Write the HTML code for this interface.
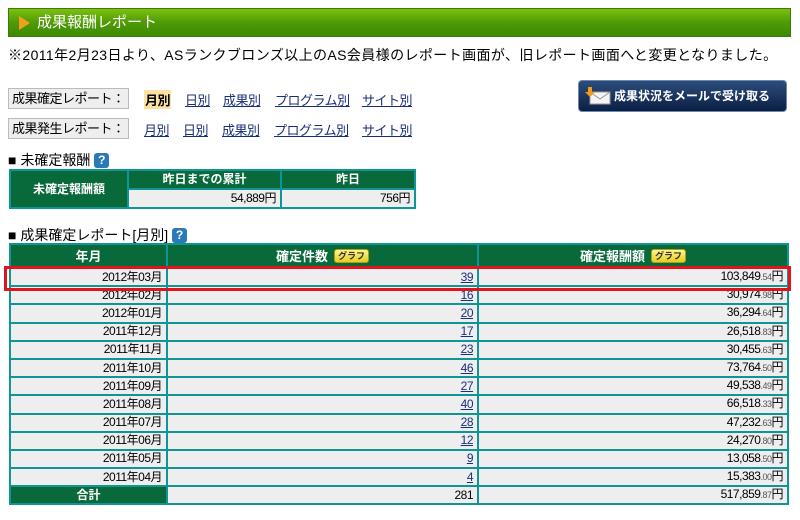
<!DOCTYPE html>
<html><head><meta charset="utf-8"><style>
*{margin:0;padding:0;box-sizing:border-box}
body{width:800px;height:520px;background:#fff;font-family:"Liberation Sans","Noto Sans CJK JP",sans-serif;font-size:12px;color:#000;position:relative;overflow:hidden}
.abs{position:absolute}
.hdr{left:8px;top:8px;width:783px;height:29px;background:linear-gradient(#7cc010,#4f9a06 50%,#3d8a04);border:1px solid #3a7a10;color:#fff;font-size:15px;line-height:27px;padding-left:28px}
.hdr:before{content:"";position:absolute;left:10px;top:7px;border-left:11px solid #f0a020;border-top:7px solid transparent;border-bottom:7px solid transparent}
a{color:#1a2f7a;text-decoration:underline}
.lab{background:#eee;border:1px solid #bbb;height:21px;line-height:19px;padding:0 3px;font-size:13px;letter-spacing:-0.5px}
.lnk{font-size:13px;letter-spacing:-0.5px}
.lnk span{position:absolute;top:0;white-space:nowrap}
.sel{background:#fbe2a0;font-weight:bold;padding:0 1px}
.btn{left:578px;top:80px;width:209px;height:32px;background:linear-gradient(#2c4d7c,#0b1f44);border:1px solid #6a88b0;border-radius:4px;color:#fff;font-weight:bold;font-size:12px;line-height:30px;padding-left:35px}
.sq{font-size:14px}
.q{display:inline-block;width:15px;height:15px;background:#2a7ab8;border-radius:3px;color:#fff;font-weight:bold;font-size:12px;text-align:center;line-height:15px;vertical-align:1px}
table{border-collapse:collapse;position:absolute;table-layout:fixed}
td,th{border:2px solid #0f9595;line-height:13px;padding:0;overflow:hidden;white-space:nowrap}
th{background:#08693a;color:#fff;font-weight:bold}
td{background:#eee;text-align:right;padding-right:4px;letter-spacing:-0.5px}
.sm{font-size:9px;color:#555}
.g{display:inline-block;background:linear-gradient(#fff58a,#e8cc20);border:1px solid #b89a10;border-radius:3px;color:#333;font-size:9px;height:14px;line-height:12px;padding:0 3px;margin-left:6px;vertical-align:2px}
.m tr{height:18.2px}
</style></head><body>
<div class="abs hdr">成果報酬レポート</div>
<div class="abs" style="left:8px;top:45px;font-size:14px;letter-spacing:0.4px">※2011年2月23日より、ASランクブロンズ以上のAS会員様のレポート画面が、旧レポート画面へと変更となりました。</div>
<div class="abs lab" style="left:8px;top:88px">成果確定レポート：</div>
<div class="abs lnk" style="left:0;top:90px"><span class="sel" style="left:144px">月別</span><span style="left:185px"><a>日別</a></span><span style="left:223px"><a>成果別</a></span><span style="left:275px"><a>プログラム別</a></span><span style="left:362px"><a>サイト別</a></span></div>
<div class="abs lab" style="left:8px;top:118px">成果発生レポート：</div>
<div class="abs lnk" style="left:0;top:120px"><span style="left:144px"><a>月別</a></span><span style="left:183px"><a>日別</a></span><span style="left:222px"><a>成果別</a></span><span style="left:274px"><a>プログラム別</a></span><span style="left:362px"><a>サイト別</a></span></div>
<div class="abs btn"><svg style="position:absolute;left:6px;top:6px" width="26" height="18"><rect x="5" y="5" width="20" height="12" fill="#f4f4f4" stroke="#999"/><path d="M5 5l10 7 10-7" fill="none" stroke="#999"/><path d="M3 0h4v5h3l-5 5-5-5h3z" fill="#f39a1a"/></svg>成果状況をメールで受け取る</div>
<div class="abs sq" style="left:8px;top:150px">■ 未確定報酬 <span class="q">?</span></div>
<table style="left:9px;top:169px;width:407px">
<tr style="height:19px"><th rowspan="2" style="width:118px">未確定報酬額</th><th style="width:153px">昨日までの累計</th><th>昨日</th></tr>
<tr style="height:19px"><td>54,889円</td><td>756円</td></tr></table>
<div class="abs sq" style="left:8px;top:225px">■ 成果確定レポート[月別] <span class="q">?</span></div>
<table class="m" style="left:9px;top:243px;width:780px">
<tr style="height:24px"><th style="width:157px;font-size:13px">年月</th><th style="width:311px;font-size:13px">確定件数<span class="g">グラフ</span></th><th style="font-size:13px">確定報酬額<span class="g">グラフ</span></th></tr>
<tr><td>2012年03月</td><td><a>39</a></td><td>103,849<span class="sm">.54</span>円</td></tr>
<tr><td>2012年02月</td><td><a>16</a></td><td>30,974<span class="sm">.98</span>円</td></tr>
<tr><td>2012年01月</td><td><a>20</a></td><td>36,294<span class="sm">.64</span>円</td></tr>
<tr><td>2011年12月</td><td><a>17</a></td><td>26,518<span class="sm">.83</span>円</td></tr>
<tr><td>2011年11月</td><td><a>23</a></td><td>30,455<span class="sm">.63</span>円</td></tr>
<tr><td>2011年10月</td><td><a>46</a></td><td>73,764<span class="sm">.50</span>円</td></tr>
<tr><td>2011年09月</td><td><a>27</a></td><td>49,538<span class="sm">.49</span>円</td></tr>
<tr><td>2011年08月</td><td><a>40</a></td><td>66,518<span class="sm">.33</span>円</td></tr>
<tr><td>2011年07月</td><td><a>28</a></td><td>47,232<span class="sm">.63</span>円</td></tr>
<tr><td>2011年06月</td><td><a>12</a></td><td>24,270<span class="sm">.80</span>円</td></tr>
<tr><td>2011年05月</td><td><a>9</a></td><td>13,058<span class="sm">.50</span>円</td></tr>
<tr><td>2011年04月</td><td><a>4</a></td><td>15,383<span class="sm">.00</span>円</td></tr>
<tr><th>合計</th><td>281</td><td>517,859<span class="sm">.87</span>円</td></tr>
</table>
<div class="abs" style="left:4px;top:266px;width:787px;height:25px;border:3px solid #e0141c"></div>
</body></html>
